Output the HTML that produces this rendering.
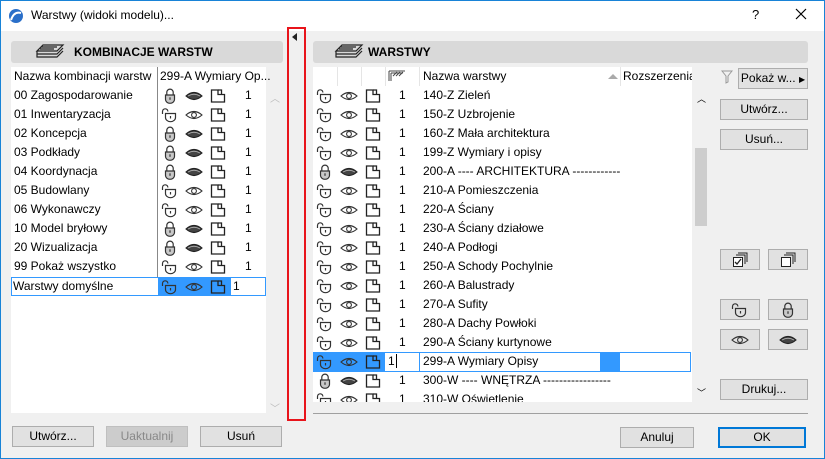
<!DOCTYPE html>
<html><head><meta charset="utf-8"><style>
*{box-sizing:border-box;margin:0;padding:0}
body{width:825px;height:459px;overflow:hidden;background:#f0f0f0;font-family:"Liberation Sans",sans-serif;font-size:12px;color:#000;position:relative}
.a{position:absolute}
.win{position:absolute;left:0;top:0;width:825px;height:459px;border:1px solid #1883d7}
.title{left:1px;top:1px;width:823px;height:30px;background:#fff}
.hdr{background:#d9d9d9;border-radius:3px;height:22px;font-weight:bold;font-size:12px}
.list{background:#fff}
.btn{background:#e1e1e1;border:1px solid #adadad;text-align:center;line-height:18px;height:21px}
.row{position:absolute;height:19px;line-height:19px;white-space:nowrap}
svg.i{position:absolute;width:18px;height:16px}
</style></head><body>
<svg width="0" height="0" style="position:absolute">
<defs>
<symbol id="lo" viewBox="0 0 18 16"><path d="M1.5 7V4.5a2.7 2.7 0 0 1 5.4 0" fill="none" stroke="#333" stroke-width="1.2"/><path d="M4.5 6.5h10v4a5 4.2 0 0 1-10 0z" fill="none" stroke="#333" stroke-width="1.2"/><path d="M9.5 9v2.5" stroke="#333" stroke-width="1.2"/></symbol>
<symbol id="lc" viewBox="0 0 18 16"><path d="M5.8 7V4.3a3.2 3.2 0 0 1 6.4 0V7" fill="none" stroke="#333" stroke-width="1.2"/><path d="M4.5 7h9v4.5a4.5 3.8 0 0 1-9 0z" fill="#c8c8c8" stroke="#333" stroke-width="1.2"/><path d="M9 9.3v2.5" stroke="#333" stroke-width="1.2"/></symbol>
<symbol id="eo" viewBox="0 0 18 16"><path d="M1 8Q9 1 17 8Q9 15 1 8z" fill="none" stroke="#333" stroke-width="1.1"/><circle cx="9" cy="8" r="2.4" fill="none" stroke="#333" stroke-width="1.1"/></symbol>
<symbol id="ec" viewBox="0 0 18 16"><path d="M1 8Q9 1 17 8Q9 15 1 8z" fill="#444" stroke="#222" stroke-width="1.1"/><path d="M3 8Q9 4.5 15 8" fill="none" stroke="#aaa" stroke-width="1"/></symbol>
<symbol id="fd" viewBox="0 0 18 16"><path d="M2.5 2h6.5v4.5h6.5V14H2.5z" fill="none" stroke="#222" stroke-width="1.3"/><path d="M9 2h3.5v4.5" fill="none" stroke="#222" stroke-width="1.3"/></symbol>
<symbol id="ly" viewBox="0 0 30 18"><path d="M8 2h20l-6 6H2z M2 8v3h20l6-6 M2 11v3h20l6-6 M6 4h16M5 6h14" fill="none" stroke="#222" stroke-width="1.2"/></symbol>
</defs></svg>
<div class="win"></div>
<div class="a title"></div>
<svg class="a" style="left:8px;top:8px" width="16" height="16"><circle cx="8" cy="8" r="7" fill="#2a6fc9"/><path d="M3 12Q6 3 13 5" stroke="#fff" stroke-width="2" fill="none"/></svg>
<div class="a" style="left:31px;top:8px;font-size:12px">Warstwy (widoki modelu)...</div>
<div class="a" style="left:752px;top:7px;font-size:13px">?</div>
<svg class="a" style="left:795px;top:8px" width="12" height="12"><path d="M1 1l10 10M11 1L1 11" stroke="#000" stroke-width="1.2"/></svg>

<!-- left panel -->
<div class="a hdr" style="left:11px;top:41px;width:272px"><svg class="a" style="left:24px;top:2px" width="30" height="18"><use href="#ly"/></svg><span class="a" style="left:63px;top:4px">KOMBINACJE WARSTW</span></div>
<div class="a list" style="left:11px;top:67px;width:255px;height:346px"></div>
<div class="a" style="left:157px;top:67px;width:1px;height:210px;background:#888"></div>
<div class="a" style="left:14px;top:69px">Nazwa kombinacji warstw</div>
<div class="a" style="left:160px;top:69px">299-A Wymiary Op...</div>
<div class="a" style="left:270px;top:90px;color:#bbb;font-size:10px">︿</div>
<div class="a" style="left:270px;top:400px;color:#bbb;font-size:10px">﹀</div>

<div class="row" style="left:14px;top:86px">00 Zagospodarowanie</div>
<div class="row" style="left:14px;top:105px">01 Inwentaryzacja</div>
<div class="row" style="left:14px;top:124px">02 Koncepcja</div>
<div class="row" style="left:14px;top:143px">03 Podkłady</div>
<div class="row" style="left:14px;top:162px">04 Koordynacja</div>
<div class="row" style="left:14px;top:181px">05 Budowlany</div>
<div class="row" style="left:14px;top:200px">06 Wykonawczy</div>
<div class="row" style="left:14px;top:219px">10 Model bryłowy</div>
<div class="row" style="left:14px;top:238px">20 Wizualizacja</div>
<div class="row" style="left:14px;top:257px">99 Pokaż wszystko</div>

<svg class="i" style="left:161px;top:88px"><use href="#lc"/></svg><svg class="i" style="left:185px;top:88px"><use href="#ec"/></svg><svg class="i" style="left:209px;top:88px"><use href="#fd"/></svg><div class="row" style="left:245px;top:86px">1</div>
<svg class="i" style="left:161px;top:107px"><use href="#lo"/></svg><svg class="i" style="left:185px;top:107px"><use href="#eo"/></svg><svg class="i" style="left:209px;top:107px"><use href="#fd"/></svg><div class="row" style="left:245px;top:105px">1</div>
<svg class="i" style="left:161px;top:126px"><use href="#lc"/></svg><svg class="i" style="left:185px;top:126px"><use href="#ec"/></svg><svg class="i" style="left:209px;top:126px"><use href="#fd"/></svg><div class="row" style="left:245px;top:124px">1</div>
<svg class="i" style="left:161px;top:145px"><use href="#lc"/></svg><svg class="i" style="left:185px;top:145px"><use href="#ec"/></svg><svg class="i" style="left:209px;top:145px"><use href="#fd"/></svg><div class="row" style="left:245px;top:143px">1</div>
<svg class="i" style="left:161px;top:164px"><use href="#lc"/></svg><svg class="i" style="left:185px;top:164px"><use href="#ec"/></svg><svg class="i" style="left:209px;top:164px"><use href="#fd"/></svg><div class="row" style="left:245px;top:162px">1</div>
<svg class="i" style="left:161px;top:183px"><use href="#lo"/></svg><svg class="i" style="left:185px;top:183px"><use href="#eo"/></svg><svg class="i" style="left:209px;top:183px"><use href="#fd"/></svg><div class="row" style="left:245px;top:181px">1</div>
<svg class="i" style="left:161px;top:202px"><use href="#lo"/></svg><svg class="i" style="left:185px;top:202px"><use href="#eo"/></svg><svg class="i" style="left:209px;top:202px"><use href="#fd"/></svg><div class="row" style="left:245px;top:200px">1</div>
<svg class="i" style="left:161px;top:221px"><use href="#lc"/></svg><svg class="i" style="left:185px;top:221px"><use href="#ec"/></svg><svg class="i" style="left:209px;top:221px"><use href="#fd"/></svg><div class="row" style="left:245px;top:219px">1</div>
<svg class="i" style="left:161px;top:240px"><use href="#lc"/></svg><svg class="i" style="left:185px;top:240px"><use href="#ec"/></svg><svg class="i" style="left:209px;top:240px"><use href="#fd"/></svg><div class="row" style="left:245px;top:238px">1</div>
<svg class="i" style="left:161px;top:259px"><use href="#lo"/></svg><svg class="i" style="left:185px;top:259px"><use href="#eo"/></svg><svg class="i" style="left:209px;top:259px"><use href="#fd"/></svg><div class="row" style="left:245px;top:257px">1</div>
<!-- selected -->
<div class="a" style="left:11px;top:277px;width:255px;height:19px;border:1px solid #3399ff;background:#fff"></div>
<div class="a" style="left:158px;top:278px;width:73px;height:17px;background:#3399ff"></div>
<div class="row" style="left:13px;top:277px">Warstwy domyślne</div>
<svg class="i" style="left:161px;top:279px"><use href="#lo"/></svg><svg class="i" style="left:185px;top:279px"><use href="#eo"/></svg><svg class="i" style="left:209px;top:279px"><use href="#fd"/></svg><div class="row" style="left:233px;top:277px">1</div>

<div class="a btn" style="left:12px;top:426px;width:82px">Utwórz...</div>
<div class="a btn" style="left:106px;top:426px;width:82px;background:#cccccc;border-color:#bfbfbf;color:#888">Uaktualnij</div>
<div class="a btn" style="left:200px;top:426px;width:82px">Usuń</div>

<!-- splitter -->
<div class="a" style="left:287px;top:27px;width:19px;height:394px;border:2px solid #e8141b"></div>
<div class="a" style="left:292px;top:33px;width:0;height:0;border-top:4px solid transparent;border-bottom:4px solid transparent;border-right:5px solid #222"></div>

<!-- right panel -->
<div class="a hdr" style="left:313px;top:41px;width:495px"><svg class="a" style="left:21px;top:2px" width="30" height="18"><use href="#ly"/></svg><span class="a" style="left:55px;top:4px">WARSTWY</span></div>
<div class="a list" style="left:313px;top:67px;width:379px;height:335px;overflow:hidden">
<div class="a" style="left:24px;top:0;width:1px;height:19px;background:#e5e5e5"></div>
<div class="a" style="left:48px;top:0;width:1px;height:19px;background:#e5e5e5"></div>
<div class="a" style="left:72px;top:0;width:1px;height:19px;background:#e5e5e5"></div>
<div class="a" style="left:106px;top:0;width:1px;height:19px;background:#e5e5e5"></div>
<div class="a" style="left:307px;top:0;width:1px;height:19px;background:#e5e5e5"></div>
<svg class="a" style="left:75px;top:3px" width="18" height="12"><path d="M1 1h16M1 1v10M3 3h12M3 3v8M5 6l4-4M8 6l4-4M11 6l4-4" stroke="#444" stroke-width="1" fill="none"/></svg>
<div class="a" style="left:110px;top:2px">Nazwa warstwy</div>
<div class="a" style="left:295px;top:7px;border-left:5px solid transparent;border-right:5px solid transparent;border-bottom:5px solid #aaa"></div>
<div class="a" style="left:310px;top:2px">Rozszerzenia</div>
</div>
<div class="a" style="left:697px;top:92px;font-size:9px">︿</div>
<div class="a" style="left:695px;top:148px;width:12px;height:78px;background:#cdcdcd"></div>
<div class="a" style="left:697px;top:386px;font-size:9px">﹀</div>

<svg class="i" style="left:316px;top:88px"><use href="#lo"/></svg><svg class="i" style="left:340px;top:88px"><use href="#eo"/></svg><svg class="i" style="left:364px;top:88px"><use href="#fd"/></svg><div class="row" style="left:399px;top:86px">1</div><div class="row" style="left:423px;top:86px">140-Z Zieleń</div>
<svg class="i" style="left:316px;top:107px"><use href="#lo"/></svg><svg class="i" style="left:340px;top:107px"><use href="#eo"/></svg><svg class="i" style="left:364px;top:107px"><use href="#fd"/></svg><div class="row" style="left:399px;top:105px">1</div><div class="row" style="left:423px;top:105px">150-Z Uzbrojenie</div>
<svg class="i" style="left:316px;top:126px"><use href="#lo"/></svg><svg class="i" style="left:340px;top:126px"><use href="#eo"/></svg><svg class="i" style="left:364px;top:126px"><use href="#fd"/></svg><div class="row" style="left:399px;top:124px">1</div><div class="row" style="left:423px;top:124px">160-Z Mała architektura</div>
<svg class="i" style="left:316px;top:145px"><use href="#lo"/></svg><svg class="i" style="left:340px;top:145px"><use href="#eo"/></svg><svg class="i" style="left:364px;top:145px"><use href="#fd"/></svg><div class="row" style="left:399px;top:143px">1</div><div class="row" style="left:423px;top:143px">199-Z Wymiary i opisy</div>
<svg class="i" style="left:316px;top:164px"><use href="#lc"/></svg><svg class="i" style="left:340px;top:164px"><use href="#ec"/></svg><svg class="i" style="left:364px;top:164px"><use href="#fd"/></svg><div class="row" style="left:399px;top:162px">1</div><div class="row" style="left:423px;top:162px">200-A ---- ARCHITEKTURA ------------</div>
<svg class="i" style="left:316px;top:183px"><use href="#lo"/></svg><svg class="i" style="left:340px;top:183px"><use href="#eo"/></svg><svg class="i" style="left:364px;top:183px"><use href="#fd"/></svg><div class="row" style="left:399px;top:181px">1</div><div class="row" style="left:423px;top:181px">210-A Pomieszczenia</div>
<svg class="i" style="left:316px;top:202px"><use href="#lo"/></svg><svg class="i" style="left:340px;top:202px"><use href="#eo"/></svg><svg class="i" style="left:364px;top:202px"><use href="#fd"/></svg><div class="row" style="left:399px;top:200px">1</div><div class="row" style="left:423px;top:200px">220-A Ściany</div>
<svg class="i" style="left:316px;top:221px"><use href="#lo"/></svg><svg class="i" style="left:340px;top:221px"><use href="#eo"/></svg><svg class="i" style="left:364px;top:221px"><use href="#fd"/></svg><div class="row" style="left:399px;top:219px">1</div><div class="row" style="left:423px;top:219px">230-A Ściany działowe</div>
<svg class="i" style="left:316px;top:240px"><use href="#lo"/></svg><svg class="i" style="left:340px;top:240px"><use href="#eo"/></svg><svg class="i" style="left:364px;top:240px"><use href="#fd"/></svg><div class="row" style="left:399px;top:238px">1</div><div class="row" style="left:423px;top:238px">240-A Podłogi</div>
<svg class="i" style="left:316px;top:259px"><use href="#lo"/></svg><svg class="i" style="left:340px;top:259px"><use href="#eo"/></svg><svg class="i" style="left:364px;top:259px"><use href="#fd"/></svg><div class="row" style="left:399px;top:257px">1</div><div class="row" style="left:423px;top:257px">250-A Schody Pochylnie</div>
<svg class="i" style="left:316px;top:278px"><use href="#lo"/></svg><svg class="i" style="left:340px;top:278px"><use href="#eo"/></svg><svg class="i" style="left:364px;top:278px"><use href="#fd"/></svg><div class="row" style="left:399px;top:276px">1</div><div class="row" style="left:423px;top:276px">260-A Balustrady</div>
<svg class="i" style="left:316px;top:297px"><use href="#lo"/></svg><svg class="i" style="left:340px;top:297px"><use href="#eo"/></svg><svg class="i" style="left:364px;top:297px"><use href="#fd"/></svg><div class="row" style="left:399px;top:295px">1</div><div class="row" style="left:423px;top:295px">270-A Sufity</div>
<svg class="i" style="left:316px;top:316px"><use href="#lo"/></svg><svg class="i" style="left:340px;top:316px"><use href="#eo"/></svg><svg class="i" style="left:364px;top:316px"><use href="#fd"/></svg><div class="row" style="left:399px;top:314px">1</div><div class="row" style="left:423px;top:314px">280-A Dachy Powłoki</div>
<svg class="i" style="left:316px;top:335px"><use href="#lo"/></svg><svg class="i" style="left:340px;top:335px"><use href="#eo"/></svg><svg class="i" style="left:364px;top:335px"><use href="#fd"/></svg><div class="row" style="left:399px;top:333px">1</div><div class="row" style="left:423px;top:333px">290-A Ściany kurtynowe</div>
<!-- selected -->
<div class="a" style="left:313px;top:352px;width:378px;height:20px;border:1px solid #3399ff;background:#fff"></div>
<div class="a" style="left:314px;top:353px;width:71px;height:18px;background:#3399ff"></div>
<div class="a" style="left:419px;top:353px;width:1px;height:18px;background:#3399ff"></div>
<div class="a" style="left:600px;top:353px;width:20px;height:18px;background:#3399ff"></div>
<svg class="i" style="left:316px;top:354px"><use href="#lo"/></svg><svg class="i" style="left:340px;top:354px"><use href="#eo"/></svg><svg class="i" style="left:364px;top:354px"><use href="#fd"/></svg><div class="row" style="left:388px;top:352px">1<span style="border-left:1px solid #000;margin-left:1px"></span></div><div class="row" style="left:423px;top:352px">299-A Wymiary Opisy</div>
<svg class="i" style="left:316px;top:373px"><use href="#lc"/></svg><svg class="i" style="left:340px;top:373px"><use href="#ec"/></svg><svg class="i" style="left:364px;top:373px"><use href="#fd"/></svg><div class="row" style="left:399px;top:371px">1</div><div class="row" style="left:423px;top:371px">300-W ---- WNĘTRZA -----------------</div>
<div class="a" style="left:313px;top:390px;width:379px;height:12px;overflow:hidden">
<svg class="i" style="left:3px;top:2px"><use href="#lo"/></svg><svg class="i" style="left:27px;top:2px"><use href="#eo"/></svg><svg class="i" style="left:51px;top:2px"><use href="#fd"/></svg><div class="row" style="left:86px;top:0">1</div><div class="row" style="left:110px;top:0">310-W Oświetlenie</div></div>

<svg class="a" style="left:721px;top:70px" width="12" height="14"><path d="M1 1h10L7 6v6L5 13V6z" fill="none" stroke="#999"/></svg>
<div class="a btn" style="left:738px;top:68px;width:70px">Pokaż w... <span style="font-size:8px">▶</span></div>
<div class="a btn" style="left:720px;top:99px;width:88px">Utwórz...</div>
<div class="a btn" style="left:720px;top:129px;width:88px">Usuń...</div>
<div class="a btn" style="left:720px;top:249px;width:40px"><svg width="16" height="16" style="margin-top:2px"><path d="M6 1h9v9M4 3h9v9" fill="none" stroke="#222"/><rect x="1.5" y="5.5" width="9" height="9" fill="#fff" stroke="#222"/><path d="M3 10l2 2 4-5" fill="none" stroke="#222" stroke-width="1.3"/></svg></div>
<div class="a btn" style="left:768px;top:249px;width:40px"><svg width="16" height="16" style="margin-top:2px"><path d="M6 1h9v9M4 3h9v9" fill="none" stroke="#222"/><rect x="1.5" y="5.5" width="9" height="9" fill="#fff" stroke="#222"/></svg></div>
<div class="a btn" style="left:720px;top:299px;width:40px"><svg width="18" height="16" style="margin-top:2px"><use href="#lo"/></svg></div>
<div class="a btn" style="left:768px;top:299px;width:40px"><svg width="18" height="16" style="margin-top:2px"><use href="#lc"/></svg></div>
<div class="a btn" style="left:720px;top:329px;width:40px"><svg width="18" height="16" style="margin-top:2px"><use href="#eo"/></svg></div>
<div class="a btn" style="left:768px;top:329px;width:40px"><svg width="18" height="16" style="margin-top:2px"><use href="#ec"/></svg></div>
<div class="a btn" style="left:720px;top:379px;width:88px">Drukuj...</div>

<div class="a" style="left:313px;top:413px;width:495px;height:1px;background:#a0a0a0"></div>
<div class="a btn" style="left:620px;top:427px;width:74px">Anuluj</div>
<div class="a btn" style="left:718px;top:427px;width:88px;border:2px solid #0078d7;line-height:16px">OK</div>
</body></html>
